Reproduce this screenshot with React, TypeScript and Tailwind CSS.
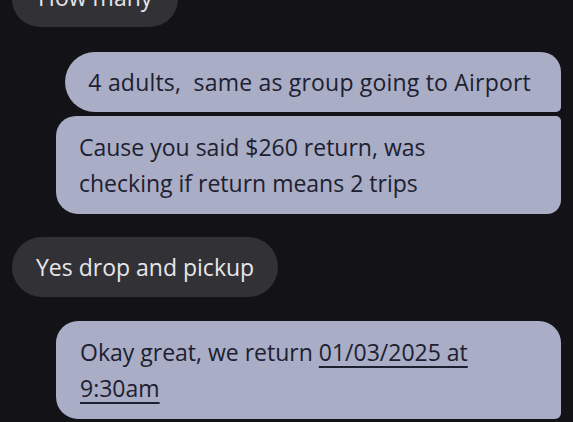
export default function App() {
  return (
    <div
      className="h-[422px] w-[573px] overflow-hidden bg-[#131217] text-[23px] leading-[36px]"
      style={{ fontFamily: "'Open Sans', Roboto, sans-serif" }}
    >
      <div className="flex flex-col px-[12px]">
        <div className="-mt-[33px] self-start rounded-[28px] bg-[#323236] py-[12px] pl-[26px] pr-[26px] text-[#e6e6ea]">
          How many
        </div>

        <div className="mt-[25px] flex flex-col items-end gap-[4px]">
          <div className="whitespace-pre-wrap rounded-l-[30px] rounded-tr-[20px] rounded-br-[5px] bg-[#a9adc5] py-[12px] pl-[23px] pr-[30px] tracking-[0.2px] text-[#1d2030]">
            {"4 adults,  same as group going to Airport"}
          </div>
          <div className="w-[505px] rounded-tl-[20px] rounded-bl-[22px] rounded-tr-[5px] rounded-br-[14px] bg-[#a9adc5] px-[23px] py-[13px] text-[#1d2030]">
            Cause you said $260 return, was
            <br />
            checking if return means 2 trips
          </div>
        </div>

        <div className="mt-[23px] self-start rounded-[30px] bg-[#323236] px-[24px] py-[12px] text-[#e6e6ea]">
          Yes drop and pickup
        </div>

        <div className="mt-[24px] w-[505px] self-end rounded-t-[22px] rounded-bl-[22px] rounded-br-[6px] bg-[#a9adc5] px-[24px] py-[13px] text-[#1d2030]">
          Okay great, we return{" "}
          <span className="underline decoration-2 underline-offset-[5px]">
            01/03/2025 at
            <br />
            9:30am
          </span>
        </div>
      </div>
    </div>
  );
}
